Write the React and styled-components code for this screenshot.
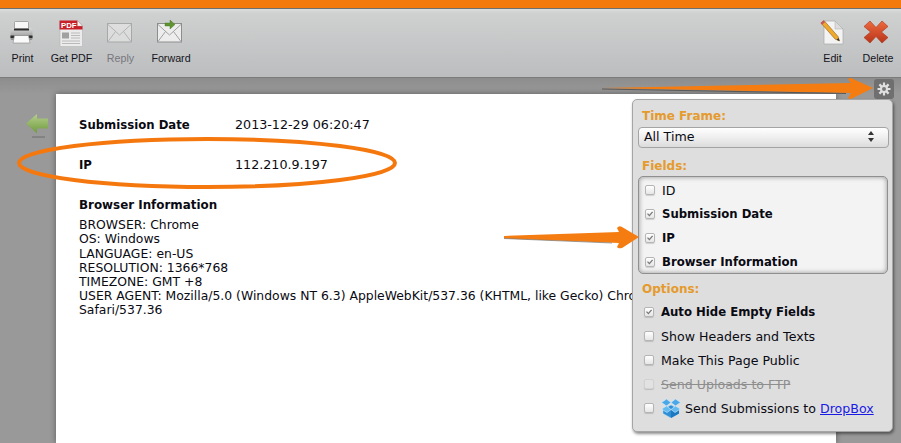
import React from "react";
import styled, { createGlobalStyle } from "styled-components";

const Global = createGlobalStyle`
  html, body { margin: 0; padding: 0; height: 443px; overflow: hidden; background: #979797; }
  #root { height: 443px; }
`;
const Page = styled.div`
  position: relative; width: 901px; height: 443px; overflow: hidden;
  display: flex; flex-direction: column;
  font-family: "DejaVu Sans", Verdana, sans-serif; color: #0a0a12;
`;
const TopBar = styled.div`height: 8px; background: #f57a0c; border-bottom: 1px solid #6f6f6f; flex: none;`;
const Toolbar = styled.div`
  flex: none; height: 69px; box-sizing: border-box;
  display: flex; justify-content: space-between;
  background: linear-gradient(#dcdddd 0, #cfd0d0 6%, #bcbdbe 100%);
  border-bottom: 1px solid #7b7b7b;
`;
const ToolGroup = styled.div`display: flex; align-items: flex-start;`;
const Tool = styled.div`
  width: ${p => p.$w}px; height: 100%; display: flex; flex-direction: column; align-items: center;
  padding-top: 11px; box-sizing: border-box;
  font: 10.7px/12px "Liberation Sans", Arial, sans-serif;
  color: ${p => (p.$off ? "#77777f" : "#14141c")};
`;
const ToolIcon = styled.svg`width: 28px; height: 28px; flex: none; margin-bottom: 4px; overflow: visible;`;
const Stage = styled.div`
  flex: 1; display: flex; min-height: 0; position: relative;
  background: linear-gradient(#8d8d8d, #999 16px);
`;
const BackCol = styled.div`
  width: 56px; flex: none; display: flex; align-items: flex-start; justify-content: center;
  padding: 36px 0 0 18px; box-sizing: border-box;
`;
const Sheet = styled.div`
  width: 780px; margin-top: 16px; flex: none; background: #fff; box-sizing: border-box;
  padding: 24px 15px 0 23px; font-size: 12.4px; line-height: 14.2px;
  box-shadow: 0 0 6px rgba(0,0,0,.4);
`;
const FieldRow = styled.div`display: grid; grid-template-columns: 156px 1fr; height: 40px;`;
const FieldName = styled.b`font-weight: 700; font-size: 11.7px;`;
const FieldValue = styled.span`font-size: 12.7px;`;
const InfoTitle = styled.div`font-weight: 700; font-size: 11.9px; margin-bottom: 6px;`;
const InfoLine = styled.div``;

const Panel = styled.div`
  position: absolute; left: 632px; top: 99px; width: 261px; height: 333px; box-sizing: border-box;
  background: #dedede; border: 1px solid #a5a5a5; border-radius: 5px;
  box-shadow: 1px 2px 3px rgba(0,0,0,.45);
  padding: 9px 3px 0 5px; font-size: 12.6px;
`;
const SectionTitle = styled.div`
  color: #e59a2c; font-weight: 700; font-size: 12px; line-height: 15px; margin: ${p => p.$m || 0};
  padding-left: 4px;
`;
const SelectBox = styled.div`
  height: 21px; margin-top: 3px; box-sizing: border-box; border: 1px solid #a4a4a4; border-radius: 4px;
  background: linear-gradient(#fff, #f0f0f0 45%, #dcdcdc);
  display: flex; align-items: center; justify-content: space-between; padding: 0 14px 2px 5px;
`;
const FieldsBox = styled.div`
  margin-top: 2px; height: 98px; box-sizing: border-box; width: 250px; padding: 1px 0 0 6px;
  border: 1px solid #8f8f8f; border-radius: 5px; background: #f3f3f3;
  box-shadow: inset 0 0 5px rgba(0,0,0,.4);
`;
const OptionRow = styled.div`
  display: flex; align-items: center; height: 24px; gap: 7px;
  font-weight: ${p => (p.$bold ? 700 : 400)};
  font-size: ${p => (p.$bold ? 11.7 : 12.6)}px;
  color: ${p => (p.$off ? "#8e8e8e" : "inherit")};
  text-decoration: ${p => (p.$off ? "line-through" : "none")};
`;
const Options = styled.div`padding-left: 6px; margin-top: 3px;`;
const Box = styled.span`
  width: 10px; height: 10px; flex: none; box-sizing: border-box; border-radius: 2px; position: relative;
  border: 1px solid ${p => (p.$off ? "#d2d2d2" : "#b5b5b5")};
  background: ${p => (p.$off ? "#e2e2e2" : "linear-gradient(#fff,#e6e6e6)")};
  box-shadow: 0 1px 1px rgba(0,0,0,.15);
`;
const Tick = styled.svg`position: absolute; left: 0; top: 0; width: 8px; height: 8px;`;
const LinkText = styled.a`color: #1a1ae6; text-decoration: underline;`;
const IconRun = styled.span`display: flex; align-items: center; gap: 4px;`;
const Gear = styled.div`
  position: absolute; left: 874px; top: 79px; width: 20px; height: 20px; border-radius: 3px; background: #6f6f6f;
  display: flex; align-items: center; justify-content: center;
`;
const Overlay = styled.svg`position: absolute; left: 0; top: 0; width: 901px; height: 443px; pointer-events: none;`;

const Check = ({ on, off }) => (
  <Box $off={off}>
    {on && (
      <Tick viewBox="0 0 8 8">
        <path d="M1.500 3.600 L3.400 5.600 L6.600 1.800" fill="none" stroke="#777" strokeWidth="1.300" />
      </Tick>
    )}
  </Box>
);

const Printer = () => (
  <ToolIcon viewBox="0 0 28 28">
    <defs><linearGradient id="pr" x1="0" y1="0" x2="0" y2="1"><stop offset="0" stopColor="#d8d8d8" /><stop offset="1" stopColor="#8a8a8a" /></linearGradient></defs>
    <rect x="5.500" y="1.500" width="14" height="9" rx="1" fill="#f7f7f7" stroke="#8a8a8a" strokeWidth=".7" />
    <path d="M1.500 10 Q1.500 8 3.500 8 H21.500 Q23.500 8 23.500 10 V19 Q23.500 20 21.500 20 H3.500 Q1.500 20 1.500 19 Z" fill="url(#pr)" />
    <rect x="5" y="8.500" width="15" height="2" fill="#2c2c2c" />
    <rect x="1.500" y="15.500" width="22" height="2.500" fill="#2e2e2e" />
    <path d="M5.500 15.500 H19.500 L21 23 H4 Z" fill="#fafafa" stroke="#8a8a8a" strokeWidth=".6" />
  </ToolIcon>
);
const Pdf = () => (
  <ToolIcon viewBox="0 0 28 28">
    <path d="M2 2 H20 L24.500 6 V26.500 H2 Z" fill="#ebebeb" stroke="#b4b4b4" strokeWidth=".6" />
    <path d="M1.500 .5 H19.500 L24.500 6 V9.500 H1.500 Z" fill="#c8202a" />
    <path d="M19.500 .5 L24.500 6 H19.500 Z" fill="#f4f4f4" stroke="#aaa" strokeWidth=".4" />
    <text x="3" y="7.800" fontFamily="Liberation Sans" fontWeight="700" fontSize="7.800" fill="#fff">PDF</text>
    <rect x="4" y="12.500" width="7" height="6" fill="#a0a0a0" />
    <path d="M13 13H22M13 15.500H22M13 18H22M4 21H22M4 23.500H22" stroke="#b4b4b4" strokeWidth=".9" />
  </ToolIcon>
);
const Mail = ({ forward, faded }) => (
  <ToolIcon viewBox="0 0 28 28" style={{ opacity: faded ? 0.55 : 1 }}>
    <rect x=".5" y="3.500" width="24" height="18.500" fill="#ededed" stroke="#8d8d8d" strokeWidth="1" />
    <path d="M1 4.500 L12.500 15 L24 4.500 M1 21.500 L8.500 11.500 M24 21.500 L16.500 11.500" fill="none" stroke="#a2a2a2" strokeWidth="1" />
    {forward && <path d="M8 3 H13 V0 L18 4.500 L13 9 V6 H8 Z" fill="#5f9431" stroke="#3f6f20" strokeWidth=".4" />}
  </ToolIcon>
);
const EditIcon = () => (
  <ToolIcon viewBox="0 0 28 28">
    <path d="M5 1 H16 L24 9 V24 H5 Z" fill="#f3f3f3" stroke="#aaa" strokeWidth=".7" />
    <path d="M16 1 V9 H24 Z" fill="#dcdcdc" stroke="#aaa" strokeWidth=".5" />
    <path d="M2 3 L5 .5 L19 16.500 L20.500 21 L16 19 Z" fill="#f0a92a" stroke="#8a6016" strokeWidth=".6" />
    <path d="M1.500 3 L4.500 .5 L6 2.300 L3 4.800 Z" fill="#c8555a" />
    <path d="M17.500 19.700 L20.500 21 L19.600 18 Z" fill="#333" />
  </ToolIcon>
);
const DeleteIcon = () => (
  <ToolIcon viewBox="0 0 28 28">
    <defs><linearGradient id="rx" x1="0" y1="0" x2="0" y2="1"><stop offset="0" stopColor="#ee6a3e" /><stop offset="1" stopColor="#b8341a" /></linearGradient></defs>
    <path d="M6 1 L12 7.500 L18 1 L24 6.500 L17.500 12 L24 17.500 L18 23 L12 16.500 L6 23 L0 17.500 L6.500 12 L0 6.500 Z" fill="url(#rx)" stroke="#a8361c" strokeWidth=".6" strokeLinejoin="round" />
  </ToolIcon>
);
const BackArrow = () => (
  <svg width="22" height="24" viewBox="0 0 22 24" style={{ flex: "none" }}>
    <defs><linearGradient id="ga" x1="0" y1="0" x2="0" y2="1"><stop offset="0" stopColor="#b5cf8b" /><stop offset="1" stopColor="#6f9a3e" /></linearGradient></defs>
    <path d="M0 9.500 L11 0 V4.500 H22 V14.500 H11 V19.500 Z" fill="url(#ga)" />
    <path d="M6 23 H19" stroke="#6d6d6d" strokeWidth="1" />
  </svg>
);
const GearIcon = () => (
  <svg width="14" height="14" viewBox="0 0 14 14">
    <g stroke="#e0e0e0" strokeWidth="2.200">
      <path d="M7 .5V13.500M.5 7H13.500M2.400 2.400L11.600 11.600M11.600 2.400L2.400 11.600" />
    </g>
    <circle cx="7" cy="7" r="4" fill="#e0e0e0" />
    <circle cx="7" cy="7" r="2" fill="#7a7a7a" />
  </svg>
);
const DropboxIcon = () => (
  <svg width="20" height="20" viewBox="0 0 20 20" style={{ flex: "none" }}>
    <path d="M2 11.500 L10 7 L18 11.500 V15.500 L10 20 L2 15.500 Z" fill="#2e8fd6" stroke="#a6d3ee" strokeWidth=".5" />
    <path d="M10 20 V12 L18 11.500 V15.500 Z" fill="#1c78c0" />
    <path d="M5.500 1 L10 4.500 L5.500 8 L.5 4.500 Z M14.500 1 L19.500 4.500 L14.500 8 L10 4.500 Z" fill="#4aa8e8" stroke="#d8eefa" strokeWidth=".6" />
    <path d="M5.500 8 L10 11.500 L6 14.500 L.5 11 Z M14.500 8 L19.500 11 L14 14.500 L10 11.500 Z" fill="#63baf0" stroke="#d8eefa" strokeWidth=".6" />
  </svg>
);

export default function App() {
  return (
    <Page>
      <Global />
      <TopBar />
      <Toolbar>
        <ToolGroup>
          <Tool $w={45}><Printer />Print</Tool>
          <Tool $w={53}><Pdf />Get PDF</Tool>
          <Tool $w={45} $off><Mail faded />Reply</Tool>
          <Tool $w={56}><Mail forward />Forward</Tool>
        </ToolGroup>
        <ToolGroup>
          <Tool $w={45}><EditIcon />Edit</Tool>
          <Tool $w={46}><DeleteIcon />Delete</Tool>
        </ToolGroup>
      </Toolbar>
      <Stage>
        <BackCol><BackArrow /></BackCol>
        <Sheet>
          <FieldRow><FieldName>Submission Date</FieldName><FieldValue>2013-12-29 06:20:47</FieldValue></FieldRow>
          <FieldRow><FieldName>IP</FieldName><FieldValue>112.210.9.197</FieldValue></FieldRow>
          <InfoTitle>Browser Information</InfoTitle>
          <InfoLine>BROWSER: Chrome</InfoLine>
          <InfoLine>OS: Windows</InfoLine>
          <InfoLine>LANGUAGE: en-US</InfoLine>
          <InfoLine>RESOLUTION: 1366*768</InfoLine>
          <InfoLine>TIMEZONE: GMT +8</InfoLine>
          <InfoLine>USER AGENT: Mozilla/5.0 (Windows NT 6.3) AppleWebKit/537.36 (KHTML, like Gecko) Chrome/31.0.1650.63 Safari/537.36</InfoLine>
        </Sheet>
      </Stage>
      <Gear><GearIcon /></Gear>
      <Panel>
        <SectionTitle>Time Frame:</SectionTitle>
        <SelectBox>
          All Time
          <svg width="6" height="11" viewBox="0 0 6 11"><path d="M3 0 L6 4 H0 Z M3 11 L6 7 H0 Z" fill="#333" /></svg>
        </SelectBox>
        <SectionTitle $m="11px 0 0">Fields:</SectionTitle>
        <FieldsBox>
          <OptionRow><Check />ID</OptionRow>
          <OptionRow $bold><Check on />Submission Date</OptionRow>
          <OptionRow $bold><Check on />IP</OptionRow>
          <OptionRow $bold><Check on />Browser Information</OptionRow>
        </FieldsBox>
        <SectionTitle $m="8px 0 0">Options:</SectionTitle>
        <Options>
          <OptionRow $bold><Check on />Auto Hide Empty Fields</OptionRow>
          <OptionRow><Check />Show Headers and Texts</OptionRow>
          <OptionRow><Check />Make This Page Public</OptionRow>
          <OptionRow $off><Check off />Send Uploads to FTP</OptionRow>
          <OptionRow>
            <Check />
            <IconRun><DropboxIcon /><span>Send Submissions to <LinkText>DropBox</LinkText></span></IconRun>
          </OptionRow>
        </Options>
      </Panel>
      <Overlay viewBox="0 0 901 443">
        <ellipse cx="207" cy="163" rx="188" ry="24" fill="none" stroke="#f5780f" strokeWidth="4" />
        <path d="M602 88 L851 83 L848 79 Q850 77 853 79 L873 88 L853 98 Q850 100 848 98 L851 93 Z" fill="#f57c10" />
        <path d="M602 89 L846 93.500" stroke="#4a4a4a" strokeWidth=".8" fill="none" />
        <path d="M504 236 L619 232 L617 228 Q619 225 622 227 L639 237 L622 248 Q618 249 617 247 L619 243 L504 238.500 Z" fill="#f57c10" />
        <path d="M504 238.500 L612 243" stroke="#777" strokeWidth=".7" fill="none" />
      </Overlay>
    </Page>
  );
}
